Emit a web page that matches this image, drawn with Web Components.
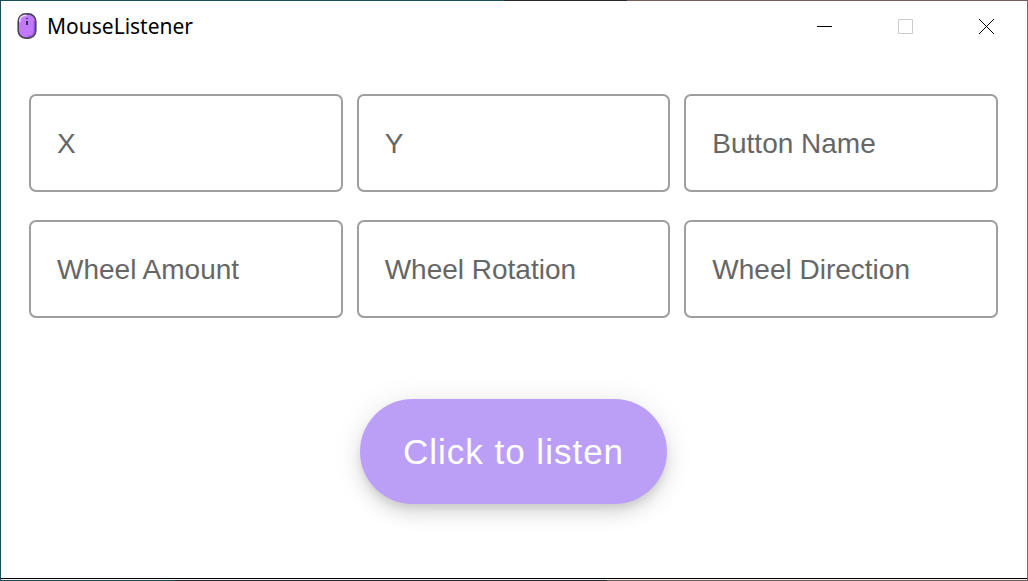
<!DOCTYPE html>
<html lang="en">
<head>
<meta charset="utf-8">
<title>MouseListener</title>
<style>
  body { margin: 0; font-family: "Liberation Sans", Arial, sans-serif; }
</style>
</head>
<body>
<app-window>
  <title-bar slot="bar">MouseListener</title-bar>
  <field-grid>
    <outlined-field label="X"></outlined-field>
    <outlined-field label="Y"></outlined-field>
    <outlined-field label="Button Name"></outlined-field>
    <outlined-field label="Wheel Amount"></outlined-field>
    <outlined-field label="Wheel Rotation"></outlined-field>
    <outlined-field label="Wheel Direction"></outlined-field>
  </field-grid>
  <fab-button>Click to listen</fab-button>
</app-window>

<script>
const define = (name, html, setup) => {
  const template = document.createElement('template');
  template.innerHTML = html;
  customElements.define(name, class extends HTMLElement {
    constructor() {
      super();
      this.attachShadow({ mode: 'open' }).append(template.content.cloneNode(true));
    }
    connectedCallback() { if (setup) setup(this); }
  });
};

define('app-window', `
  <style>
    /* The desktop shows as a one pixel edge round the window. */
    :host {
      box-sizing: border-box; display: flex; flex-direction: column;
      min-height: 100vh; padding: 1px;
      background:
        linear-gradient(90deg, #1b4d5b 49%, #25292d 49% 61%, #735d5b 61%) top / 100% 1px no-repeat,
        linear-gradient(90deg, #1b4d5b 17%, #25292d 17% 59%, #735d5b 59%) bottom / 100% 1px no-repeat,
        linear-gradient(90deg, #1b4d5b 50%, #736765 50%);
    }
    .frame {
      flex: 1; display: flex; flex-direction: column;
      background: #fff; border-bottom: 1px solid #f5eef5;
    }
    main {
      flex: 1; display: flex; flex-direction: column; gap: 81px;
      padding: 42px 29px 40px 28px; border-bottom: 1px solid #000;
    }
  </style>
  <div class="frame">
    <slot name="bar"></slot>
    <main><slot></slot></main>
  </div>`);

define('title-bar', `
  <style>
    :host {
      display: flex; align-items: flex-start; height: 51px; padding-left: 16px;
      font: 21px/28px "Noto Sans", "Open Sans", sans-serif; color: #000;
    }
    .brand { flex: 1; display: flex; align-items: center; gap: 10px; height: 50px; }
    svg { display: block; }
    button {
      display: grid; place-items: center; width: 81px; height: 51px;
      margin: 0; padding: 0; border: 0; background: none; color: #000;
    }
    button:disabled { color: #ccc; }
  </style>
  <div class="brand">
    <svg width="20" height="26" viewBox="0 0 20 26" aria-hidden="true">
      <rect x="1.2" y=".9" width="17.6" height="24.2" rx="7.5" fill="#c17aff" stroke="#4a4358" stroke-width="1.6"/>
      <path d="M2.8 9V8q0-4.8 4.7-5.6h2" fill="none" stroke="#ead3ff" stroke-width="1.5"/>
      <path d="M17.3 8v9.5q0 5.8-6.3 6.1" fill="none" stroke="#9151df" stroke-width="1.5"/>
      <path d="M9 5h2v1H9zM9 8h2v4H9z" fill="#3d3849"/>
    </svg>
    <span><slot></slot></span>
  </div>
  <button type="button" aria-label="Minimize"><svg width="15" height="15"><path d="M0 7.5h15" stroke="currentColor"/></svg></button>
  <button type="button" aria-label="Maximize" disabled><svg width="15" height="15"><path d="M.5.5h14v14H.5z" fill="none" stroke="currentColor"/></svg></button>
  <button type="button" aria-label="Close"><svg width="15" height="15"><path d="M0 0l15 15M15 0L0 15" stroke="currentColor" stroke-width="1"/></svg></button>`);

define('field-grid', `
  <style>
    :host { display: grid; grid-template-columns: repeat(3, minmax(0, 1fr)); gap: 28px 14px; }
  </style>
  <slot></slot>`);

define('outlined-field', `
  <style>
    :host { display: grid; align-items: center; font-size: 28px; line-height: 40px; }
    label, input { grid-area: 1 / 1; }
    label { z-index: 1; padding: 2px 0 0 28px; color: #666; pointer-events: none; }
    input {
      box-sizing: border-box; width: 100%; height: 98px; margin: 0; padding: 2px 26px 0;
      border: 2px solid #9e9e9e; border-radius: 7px; background: #fff;
      font: inherit; color: #222; outline: none;
    }
    input:focus { border-color: #bb9ff7; }
    input:not(:placeholder-shown) + label { visibility: hidden; }
  </style>
  <input id="field" type="text" placeholder=" ">
  <label for="field"></label>`,
  host => { host.shadowRoot.querySelector('label').textContent = host.getAttribute('label'); });

define('fab-button', `
  <style>
    :host { display: block; align-self: center; }
    button {
      display: block; height: 105px; margin: 0; padding: 0 43px;
      border: 0; border-radius: 53px; background: #bb9ff7; color: #fff;
      font: 35px/60px "Liberation Sans", Arial, sans-serif; letter-spacing: 1px;
      box-shadow: 0 5px 9px -2px rgba(0,0,0,.1), 0 10px 18px rgba(0,0,0,.1), 0 2px 32px rgba(0,0,0,.08);
      cursor: pointer;
    }
  </style>
  <button type="button"><slot></slot></button>`);
</script>
</body>
</html>
